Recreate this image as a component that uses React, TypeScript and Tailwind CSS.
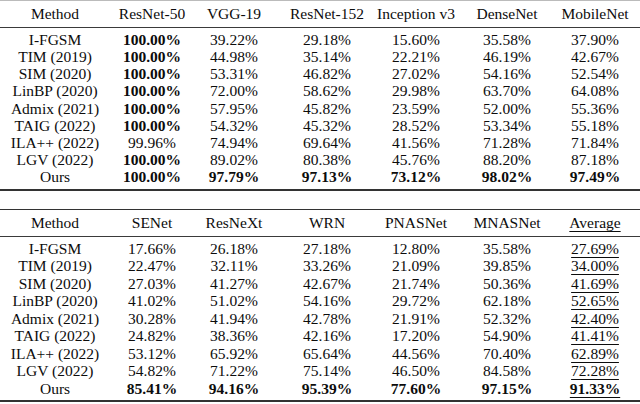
import React from 'react'

const centers = [55, 152, 234, 327, 416, 507, 595]

type Cell = { v: string; b?: boolean; u?: boolean }

const methods = ['I-FGSM', 'TIM (2019)', 'SIM (2020)', 'LinBP (2020)', 'Admix (2021)', 'TAIG (2022)', 'ILA++ (2022)', 'LGV (2022)', 'Ours']

const top = {
  head: ['Method', 'ResNet-50', 'VGG-19', 'ResNet-152', 'Inception v3', 'DenseNet', 'MobileNet'],
  rows: [
    ['100.00%', '39.22%', '29.18%', '15.60%', '35.58%', '37.90%'],
    ['100.00%', '44.98%', '35.14%', '22.21%', '46.19%', '42.67%'],
    ['100.00%', '53.31%', '46.82%', '27.02%', '54.16%', '52.54%'],
    ['100.00%', '72.00%', '58.62%', '29.98%', '63.70%', '64.08%'],
    ['100.00%', '57.95%', '45.82%', '23.59%', '52.00%', '55.36%'],
    ['100.00%', '54.32%', '45.32%', '28.52%', '53.34%', '55.18%'],
    ['99.96%', '74.94%', '69.64%', '41.56%', '71.28%', '71.84%'],
    ['100.00%', '89.02%', '80.38%', '45.76%', '88.20%', '87.18%'],
    ['100.00%', '97.79%', '97.13%', '73.12%', '98.02%', '97.49%'],
  ],
}

const bottom = {
  head: ['Method', 'SENet', 'ResNeXt', 'WRN', 'PNASNet', 'MNASNet', 'Average'],
  rows: [
    ['17.66%', '26.18%', '27.18%', '12.80%', '35.58%', '27.69%'],
    ['22.47%', '32.11%', '33.26%', '21.09%', '39.85%', '34.00%'],
    ['27.03%', '41.27%', '42.67%', '21.74%', '50.36%', '41.69%'],
    ['41.02%', '51.02%', '54.16%', '29.72%', '62.18%', '52.65%'],
    ['30.28%', '41.94%', '42.78%', '21.91%', '52.32%', '42.40%'],
    ['24.82%', '38.36%', '42.16%', '17.20%', '54.90%', '41.41%'],
    ['53.12%', '65.92%', '65.64%', '44.56%', '70.40%', '62.89%'],
    ['54.82%', '71.22%', '75.14%', '46.50%', '84.58%', '72.28%'],
    ['85.41%', '94.16%', '95.39%', '77.60%', '97.15%', '91.33%'],
  ],
}

function Row({ cells, className }: { cells: Cell[]; className: string }) {
  return (
    <div className={`relative ${className}`}>
      {cells.map((c, i) => (
        <div
          key={i}
          className="absolute top-0 h-full flex items-center justify-center w-0 whitespace-nowrap"
          style={{ left: centers[i] }}
        >
          <span className={`${c.b ? 'font-bold' : ''} ${c.u ? 'underline decoration-1 underline-offset-[3px]' : ''}`}>
            {c.v}
          </span>
        </div>
      ))}
    </div>
  )
}

function ResultTable({ data, boldTop, underlineLast, rowH }: { data: typeof top; boldTop?: boolean; underlineLast?: boolean; rowH: string }) {
  return (
    <div>
      <Row
        className="h-[26px]"
        cells={data.head.map((h, i) => ({ v: h, u: underlineLast && i === 6 }))}
      />
      <div className="h-px bg-[#3a3a3a]" />
      <div className="py-[3px]">
        {data.rows.map((r, ri) => {
          const ours = ri === data.rows.length - 1
          return (
            <Row
              key={ri}
              className={rowH}
              cells={[
                { v: methods[ri] },
                ...r.map((v, ci) => ({
                  v,
                  b: ours || (boldTop && ci === 0 && v === '100.00%'),
                  u: underlineLast && ci === 5,
                })),
              ]}
            />
          )
        })}
      </div>
    </div>
  )
}

export default function App() {
  return (
    <div className="w-[640px] h-[404px] bg-white text-[#0c0c0c] text-[15.5px] leading-none overflow-hidden font-['Liberation_Serif','Times_New_Roman',serif]">
      <div className="h-px bg-[#bbb]" />
      <ResultTable data={top} boldTop rowH="h-[17.2px]" />
      <div className="h-[2px] bg-[#333]" />
      <div className="h-[18px]" />
      <div className="h-px bg-[#333]" />
      <ResultTable data={bottom} underlineLast rowH="h-[17.5px]" />
      <div className="h-[2px] bg-[#333]" />
    </div>
  )
}
